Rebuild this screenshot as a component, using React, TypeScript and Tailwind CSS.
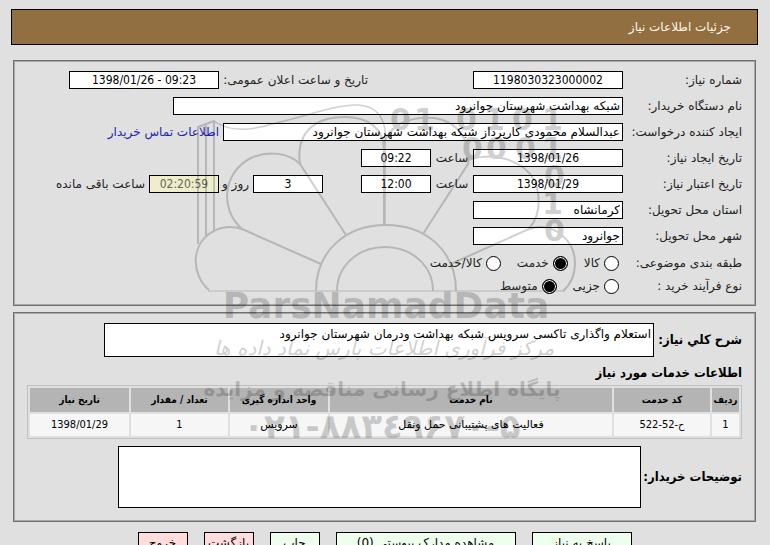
import React from 'react'

const condensed = "font-['DejaVu_Sans_Condensed','DejaVu_Sans',sans-serif]"
const inputBase = 'h-[18px] shrink-0 border border-black bg-white text-black text-[12px] outline-none'
const labelBase = 'shrink-0 whitespace-nowrap text-[12px] text-[#222]'
const panelBase = 'mx-0.5 border border-[#707070] shadow-[inset_0_0_0_1px_#a8a8a8] px-[13px] pt-[10px]'
const rowBase = 'flex h-[18px] items-center'

function Label({ id, children }: { id: string; children: React.ReactNode }) {
  return <label htmlFor={id} className={`${labelBase} w-[119px]`}>{children}</label>
}

function Text({ id, value, className }: { id: string; value: string; className: string }) {
  return <input id={id} defaultValue={value} readOnly className={`${inputBase} ${className}`} />
}

// short centered values: numbers, dates and times
function Num({ id, value, className }: { id: string; value: string; className: string }) {
  return <input id={id} dir="ltr" defaultValue={value} readOnly className={`${inputBase} ${condensed} text-center ${className}`} />
}

function Choice({ name, label, checked }: { name: string; label: string; checked?: boolean }) {
  return (
    <label className="flex items-center gap-1 whitespace-nowrap text-[12px] text-[#222]">
      <input type="radio" name={name} defaultChecked={checked}
        className="size-[15px] appearance-none rounded-full border border-black bg-white checked:bg-black checked:shadow-[inset_0_0_0_1px_#fff]" />
      {label}
    </label>
  )
}

const bits = [
  { bit: '0', x: 390, y: 130 }, { bit: '1', x: 414, y: 130 }, { bit: '0', x: 456, y: 130 },
  { bit: '1', x: 484, y: 130 }, { bit: '0', x: 512, y: 130 }, { bit: '1', x: 542, y: 130 },
  { bit: '0', x: 462, y: 159 }, { bit: '0', x: 486, y: 159 }, { bit: '0', x: 515, y: 159 }, { bit: '1', x: 542, y: 159 },
  { bit: '0', x: 544, y: 187 }, { bit: '1', x: 542, y: 214 }, { bit: '0', x: 544, y: 241 },
]

function Watermark() {
  return (
    <svg className="pointer-events-none absolute top-20 left-1/2 h-[380px] w-[400px] -translate-x-1/2 opacity-[0.18]" viewBox="185 80 400 380" direction="ltr" aria-hidden="true">
      <g fill="none" stroke="#000" strokeWidth="2">
        <path d="M209 290C191 275 190 243 214 231C223 226 234 226 242 229L321 264" />
        <path d="M242 229C219 209 223 172 251 158C269 150 289 153 300 164L346 235" />
        <path d="M300 164C296 136 311 117 345 117C368 117 384 128 384 151V225" />
        <path d="M384 145C388 125 410 116 434 118C458 121 472 143 468 164L423 234" />
        <path d="M468 160C491 152 522 158 535 181C542 202 539 217 529 229L453 263" />
        <path d="M529 229C554 221 575 241 575 263C575 277 570 285 563 291" />
        <path d="M316 291C316 252 345 225 386 225C427 225 456 252 456 291" />
        <path d="M337 291C337 266 358 247 385 247C412 247 433 266 433 291" />
        <path d="M208 291H565" strokeWidth="1" />
        <path d="M198 244V127L214 121V231M206 236V124" />
        <path d="M214 121C230 133 254 130 276 123C308 116 337 104 358 105C376 106 383 116 385 130V225" strokeWidth="1.5" />
      </g>
      <g fontFamily="'DejaVu Sans', sans-serif" fontWeight="700" fontSize="30">
        {bits.map((b, i) => <text key={i} x={b.x} y={b.y}>{b.bit}</text>)}
      </g>
      <g textAnchor="middle" fontFamily="'DejaVu Sans', sans-serif">
        <text x="386" y="318" fontSize="36" fontWeight="700">ParsNamadData</text>
        <text x="384" y="355" fontSize="20" fontStyle="italic">مرکز فرآوری اطلاعات پارس نماد داده ها</text>
        <text x="382" y="396" fontSize="20" fontWeight="700">پایگاه اطلاع رسانی مناقصه و مزایده</text>
        <text x="382" y="438" fontSize="34" fontWeight="700">۰۲۱-۸۸۳٤۹۶۷۰-۵</text>
      </g>
    </svg>
  )
}

const columns = [
  { title: 'ردیف', width: 'w-[27px]' },
  { title: 'کد خدمت', width: 'w-[96px]' },
  { title: 'نام خدمت', width: '' },
  { title: 'واحد اندازه گیری', width: 'w-[98px]' },
  { title: 'تعداد / مقدار', width: 'w-[97px]' },
  { title: 'تاریخ نیاز', width: 'w-[99px]' },
]

const services = [
  { row: '1', code: 'ح-52-522', name: 'فعالیت های پشتیبانی حمل ونقل', unit: 'سرویس', count: '1', date: '1398/01/29' },
]

const buttons = [
  { title: 'پاسخ به نیاز', style: 'w-[100px] bg-[#eeffee]' },
  { title: 'مشاهده مدارک پیوستی (0)', style: 'w-[180px] bg-[#eeffee]' },
  { title: 'چاپ', style: 'w-[50px] bg-[#eeffee]' },
  { title: 'بازگشت', style: 'w-[50px] bg-[#ffdddd]' },
  { title: 'خروج', style: 'w-[50px] bg-[#ffdddd]' },
]

export default function App() {
  const cell = 'h-[22px] bg-[#f6f6f6]'
  return (
    <div dir="rtl" className="relative h-screen overflow-hidden bg-[#e0e0e0] pt-[9px] pr-3 pl-[11px] font-['DejaVu_Sans',sans-serif] leading-4">
      <header className="flex h-9 items-center border border-black bg-[#916f41] px-[26px]">
        <h1 className="text-[12px] text-[#fff8e8]">جزئیات اطلاعات نیاز</h1>
      </header>

      <section className={`${panelBase} mt-[15px] pb-[9px]`}>
        <div className="flex flex-col gap-2">
          <div className={rowBase}>
            <Label id="number">شماره نیاز:</Label>
            <Num id="number" value="1198030323000002" className="w-[150px]" />
            <label htmlFor="announced" className={`${labelBase} ms-[105px] w-[149px]`}>تاریخ و ساعت اعلان عمومی:</label>
            <Num id="announced" value="1398/01/26 - 09:23" className="w-[150px]" />
          </div>
          <div className={rowBase}>
            <Label id="buyer">نام دستگاه خریدار:</Label>
            <Text id="buyer" value="شبکه بهداشت شهرستان جوانرود" className="w-[450px] px-0.5" />
          </div>
          <div className={rowBase}>
            <Label id="creator">ایجاد کننده درخواست:</Label>
            <Text id="creator" value="عبدالسلام محمودی کارپرداز شبکه بهداشت شهرستان جوانرود" className="w-[400px] px-0.5" />
            <a href="#contact" className="ms-1 text-[12px] whitespace-nowrap text-[#2222bb]">اطلاعات تماس خریدار</a>
          </div>
          <div className={rowBase}>
            <Label id="created">تاریخ ایجاد نیاز:</Label>
            <Num id="created" value="1398/01/26" className="w-[150px]" />
            <label htmlFor="createdTime" className={`${labelBase} w-[42px] text-center`}>ساعت</label>
            <Num id="createdTime" value="09:22" className="w-[70px]" />
          </div>
          <div className={rowBase}>
            <Label id="expires">تاریخ اعتبار نیاز:</Label>
            <Num id="expires" value="1398/01/29" className="w-[150px]" />
            <label htmlFor="expiresTime" className={`${labelBase} w-[42px] text-center`}>ساعت</label>
            <Num id="expiresTime" value="12:00" className="w-[70px]" />
            <Num id="days" value="3" className="mr-[38px] w-[70px]" />
            <label htmlFor="days" className={`${labelBase} w-[34px] ps-1`}>روز و</label>
            <input id="remaining" defaultValue="02:20:59" readOnly
              className={`${condensed} h-[18px] w-[70px] shrink-0 border border-black bg-[#eeeecc] text-center text-[12px] text-[#666655] outline-none`} />
            <label htmlFor="remaining" className={`${labelBase} ps-1`}>ساعت باقی مانده</label>
          </div>
          <div className={rowBase}>
            <Label id="province">استان محل تحویل:</Label>
            <Text id="province" value="کرمانشاه" className="w-[150px] px-0.5" />
          </div>
          <div className={rowBase}>
            <Label id="city">شهر محل تحویل:</Label>
            <Text id="city" value="جوانرود" className="w-[150px] px-0.5" />
          </div>
        </div>

        <div className="mt-2 flex flex-col gap-[3px]">
          <div role="radiogroup" aria-labelledby="category" className="flex h-5 items-center">
            <span id="category" className={`${labelBase} w-[123px]`}>طبقه بندی موضوعی:</span>
            <div className="flex gap-4">
              <Choice name="category" label="کالا" />
              <Choice name="category" label="خدمت" checked />
              <Choice name="category" label="کالا/خدمت" />
            </div>
          </div>
          <div role="radiogroup" aria-labelledby="process" className="flex h-5 items-center">
            <span id="process" className={`${labelBase} w-[123px]`}>نوع فرآیند خرید :</span>
            <div className="flex gap-4">
              <Choice name="process" label="جزیی" />
              <Choice name="process" label="متوسط" checked />
            </div>
          </div>
        </div>
      </section>

      <section className={`${panelBase} mt-[6px] pb-[13px]`}>
        <div className="flex items-center">
          <label htmlFor="summary" className={`${condensed} w-[88px] shrink-0 text-[13px] font-bold whitespace-nowrap`}>شرح کلي نیاز:</label>
          <textarea id="summary" readOnly defaultValue="استعلام واگذاری تاکسی سرویس شبکه بهداشت ودرمان شهرستان جوانرود"
            className="block h-[34px] w-[550px] resize-none overflow-hidden border border-black bg-white px-0.5 pt-0.5 text-[12px] outline-none" />
        </div>
        <h2 className={`${condensed} my-2 h-3 text-[13px] leading-4 font-bold`}>اطلاعات خدمات مورد نیاز</h2>
        <table className="w-full table-fixed border-separate border-spacing-0.5 border border-[#c0c0c0] text-center text-[11px]">
          <thead>
            <tr>
              {columns.map(c => <th key={c.title} className={`${condensed} ${c.width} h-6 bg-[#b4b4b4] text-[10px] font-bold whitespace-nowrap`}>{c.title}</th>)}
            </tr>
          </thead>
          <tbody>
            {services.map(s => (
              <tr key={s.row}>
                <td className={`${cell} ${condensed}`}>{s.row}</td>
                <td className={`${cell} ${condensed}`}>{s.code}</td>
                <td className={cell}>{s.name}</td>
                <td className={cell}>{s.unit}</td>
                <td className={`${cell} ${condensed}`}>{s.count}</td>
                <td className={`${cell} ${condensed}`}>{s.date}</td>
              </tr>
            ))}
          </tbody>
        </table>
        <div className="mt-[7px] flex items-center">
          <label htmlFor="notes" className={`${condensed} w-[101px] shrink-0 text-[13px] font-bold whitespace-nowrap`}>توضیحات خریدار:</label>
          <textarea id="notes" readOnly className="block h-[62px] w-[523px] resize-none border border-black bg-white outline-none" />
        </div>
      </section>

      <div className="mt-[10px] flex justify-center gap-4">
        {buttons.map(b => (
          <button key={b.title} type="button" className={`${b.style} h-[22px] shrink-0 border border-black text-[12px] whitespace-nowrap`}>{b.title}</button>
        ))}
      </div>

      <Watermark />
    </div>
  )
}
